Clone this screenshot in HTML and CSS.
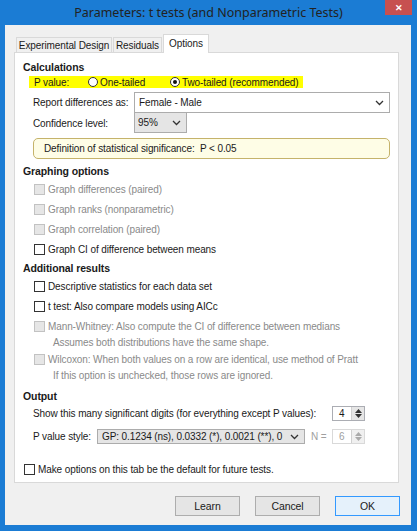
FILE: index.html
```html
<!DOCTYPE html>
<html>
<head>
  <meta name="viewport" content="width=device-width, initial-scale=1">
  <link rel="stylesheet" href="styles.css">
</head>
<body>
  <div class="window">
    <div class="titlebar">
      <span class="title">Parameters: t tests (and Nonparametric Tests)</span>
      <span class="close">&#x2715;</span>
    </div>
    <div class="client">
      <div class="tabs">
        <div class="tab tab-design">Experimental Design</div>
        <div class="tab tab-resid">Residuals</div>
        <div class="tab active">Options</div>
      </div>
      <div class="panel">
        <div class="heading h-calc">Calculations</div>
        <div class="row row-p">
          <span class="highlight">
            <span class="lbl-p">P value:</span>
            <span class="radio"></span><span class="radio-text">One-tailed</span>
            <span class="radio checked"></span><span class="radio-text last">Two-tailed (recommended)</span>
          </span>
        </div>
        <div class="row row-report">
          <span class="lbl-field">Report differences as:</span>
          <div class="select select-wide">
            <span>Female - Male</span>
            <svg width="9" height="6" viewBox="0 0 9 6"><path d="M1 1 L4.5 4.5 L8 1" fill="none" stroke="#333" stroke-width="1.3"/></svg>
          </div>
        </div>
        <div class="row row-conf">
          <span class="lbl-field">Confidence level:</span>
          <div class="select select-gray select-conf">
            <span>95%</span>
            <svg width="9" height="6" viewBox="0 0 9 6"><path d="M1 1 L4.5 4.5 L8 1" fill="none" stroke="#333" stroke-width="1.3"/></svg>
          </div>
        </div>
        <div class="defbox">Definition of statistical significance:&nbsp; P &lt; 0.05</div>

        <div class="heading h-graph">Graphing options</div>
        <div class="check-row disabled"><span class="box"></span>Graph differences (paired)</div>
        <div class="check-row disabled"><span class="box"></span>Graph ranks (nonparametric)</div>
        <div class="check-row disabled"><span class="box"></span>Graph correlation (paired)</div>
        <div class="check-row"><span class="box"></span>Graph CI of difference between means</div>

        <div class="heading h-add">Additional results</div>
        <div class="check-row"><span class="box"></span>Descriptive statistics for each data set</div>
        <div class="check-row"><span class="box"></span>t test: Also compare models using AICc</div>
        <div class="check-row disabled"><span class="box"></span>Mann-Whitney: Also compute the CI of difference between medians</div>
        <div class="sub">Assumes both distributions have the same shape.</div>
        <div class="check-row disabled"><span class="box"></span>Wilcoxon: When both values on a row are identical, use method of Pratt</div>
        <div class="sub">If this option is unchecked, those rows are ignored.</div>

        <div class="heading h-out">Output</div>
        <div class="row row-digits">
          <span class="lbl-digits">Show this many significant digits (for everything except P values):</span>
          <div class="spin">
            <span class="spin-val">4</span>
            <span class="spin-btns">
              <svg width="7" height="4" viewBox="0 0 7 4"><path d="M0 4 L3.5 0 L7 4 Z" fill="#333"/></svg>
              <svg width="7" height="4" viewBox="0 0 7 4"><path d="M0 0 L3.5 4 L7 0 Z" fill="#333"/></svg>
            </span>
          </div>
        </div>
        <div class="row row-style">
          <span class="lbl-style">P value style:</span>
          <div class="select select-gray select-style">
            <span class="clip">GP: 0.1234 (ns), 0.0332 (*), 0.0021 (**), 0</span>
            <svg width="9" height="6" viewBox="0 0 9 6"><path d="M1 1 L4.5 4.5 L8 1" fill="none" stroke="#333" stroke-width="1.3"/></svg>
          </div>
          <span class="lbl-n">N =</span>
          <div class="spin spin-off">
            <span class="spin-val">6</span>
            <span class="spin-btns">
              <svg width="7" height="4" viewBox="0 0 7 4"><path d="M0 4 L3.5 0 L7 4 Z" fill="#aaa"/></svg>
              <svg width="7" height="4" viewBox="0 0 7 4"><path d="M0 0 L3.5 4 L7 0 Z" fill="#aaa"/></svg>
            </span>
          </div>
        </div>
        <div class="check-row default-row"><span class="box"></span>Make options on this tab be the default for future tests.</div>
      </div>
      <div class="buttons">
        <div class="btn">Learn</div>
        <div class="btn">Cancel</div>
        <div class="btn btn-ok">OK</div>
      </div>
    </div>
  </div>
</body>
</html>
```

FILE: styles.css
```css
body {
  margin: 0;
  padding: 0;
  background-color: #1b7cd4;
  font-family: "Liberation Sans", Arial, sans-serif;
  font-size: 10px;
  letter-spacing: -0.1px;
  color: #1a1a1a;
  white-space: nowrap;
}
.window {
  width: 417px;
  height: 531px;
  background-color: #1b7cd4;
}
.titlebar {
  height: 25px;
  position: relative;
  display: flex;
  justify-content: center;
  align-items: center;
}
.title {
  font-family: "Noto Sans", sans-serif;
  font-size: 12.5px;
  letter-spacing: 0;
  color: #222;
  margin-top: -1px;
}
.close {
  position: absolute;
  top: 0;
  right: 5px;
  width: 27px;
  height: 15px;
  background-color: #c75050;
  color: #fff;
  font-size: 9px;
  font-weight: bold;
  display: flex;
  justify-content: center;
  align-items: center;
}
.client {
  margin-left: 5px;
  width: 406px;
  height: 500px;
  background-color: #f0f0f0;
  box-sizing: border-box;
  padding-top: 9px;
}

/* tabs */
.tabs {
  display: flex;
  align-items: flex-end;
  height: 18px;
  margin-left: 11px;
  position: relative;
  z-index: 1;
}
.tab {
  height: 15px;
  box-sizing: border-box;
  border: 1px solid #d9d9d9;
  border-bottom: none;
  background-color: #f0f0f0;
  display: flex;
  align-items: center;
  justify-content: center;
  margin-right: 1px;
  flex-shrink: 0;
}
.tab-design { width: 96px; }
.tab-resid { width: 49px; }
.tab.active {
  width: 46px;
  height: 19px;
  background-color: #fff;
  margin-bottom: -1px;
  padding-bottom: 2px;
}

/* panel */
.panel {
  margin-left: 9px;
  width: 385px;
  height: 431px;
  box-sizing: border-box;
  background-color: #fff;
  border: 1px solid #d9d9d9;
  padding: 6px 0 0 8px;
}
.heading {
  font-weight: bold;
  font-size: 10.5px;
  height: 16px;
  line-height: 16px;
}
.h-graph { margin-top: 4px; }
.h-add { margin-top: 1px; }
.h-out { margin-top: 6px; }

.row {
  display: flex;
  align-items: center;
}
.row > * { flex-shrink: 0; }
.row-p { height: 14px; }
.highlight {
  display: flex;
  align-items: center;
  background-color: #ffff00;
  height: 12px;
  margin-left: 6px;
  padding: 0 4px 0 5px;
}
.highlight > * { flex-shrink: 0; }
.lbl-p { width: 54px; }
.radio {
  width: 10px;
  height: 10px;
  box-sizing: border-box;
  border: 1px solid #333;
  border-radius: 50%;
  background-color: #fff;
  margin-right: 2px;
  position: relative;
}
.radio.checked::after {
  content: "";
  position: absolute;
  left: 2px;
  top: 2px;
  width: 4px;
  height: 4px;
  border-radius: 50%;
  background-color: #111;
}
.radio-text {
  width: 70px;
}
.radio-text.last { width: auto; }

.row-report {
  height: 21px;
  margin-top: 3px;
}
.row-conf { height: 20px; }
.lbl-field {
  width: 101px;
  margin-left: 10px;
}
.select {
  height: 100%;
  box-sizing: border-box;
  border: 1px solid #acacac;
  background-color: #fff;
  display: flex;
  align-items: center;
  justify-content: space-between;
  padding: 0 5px 0 4px;
}
.select-wide { width: 256px; }
.select-gray { background-color: #e5e5e5; }
.select-conf {
  width: 53px;
  border-top: none;
  padding-left: 3px;
}

.defbox {
  margin: 5px 0 0 10px;
  width: 357px;
  height: 21px;
  box-sizing: border-box;
  background-color: #fefde6;
  border: 1px solid #c5b36b;
  border-radius: 5px;
  display: flex;
  align-items: center;
  padding-left: 10px;
}

/* checkboxes */
.check-row {
  height: 20px;
  display: flex;
  align-items: center;
  margin-left: 11px;
}
.box {
  width: 11px;
  height: 11px;
  box-sizing: border-box;
  border: 1px solid #333;
  background-color: #fff;
  margin-right: 3px;
  flex-shrink: 0;
}
.check-row.disabled { color: #8a8a8a; }
.check-row.disabled .box {
  border-color: #c2c2c2;
  background-color: #e6e6e6;
}
.sub {
  height: 13px;
  line-height: 13px;
  margin-left: 30px;
  color: #8a8a8a;
}

/* output */
.row-digits {
  height: 15px;
  margin-top: 2px;
}
.lbl-digits {
  margin-left: 10px;
  width: 299px;
}
.spin {
  width: 33px;
  height: 15px;
  box-sizing: border-box;
  border: 1px solid #abadb3;
  background-color: #fff;
  display: flex;
}
.spin-val {
  flex: 1;
  padding-left: 6px;
  line-height: 13px;
}
.spin-btns {
  width: 12px;
  background-color: #e6e6e6;
  border-left: 1px solid #d0d0d0;
  display: flex;
  flex-direction: column;
  justify-content: space-around;
  align-items: center;
  padding: 1px 0;
}
.spin-off {
  border-color: #d9d9d9;
  color: #a0a0a0;
}
.spin-off .spin-btns { background-color: #f0f0f0; }
.row-style {
  height: 15px;
  margin-top: 8px;
}
.lbl-style {
  margin-left: 10px;
  width: 64px;
}
.select-style {
  width: 208px;
  padding-left: 4px;
}
.clip {
  overflow: hidden;
  width: 186px;
}
.lbl-n {
  width: 27px;
  color: #a0a0a0;
  padding-left: 6px;
  box-sizing: border-box;
}
.default-row {
  margin-left: 1px;
  margin-top: 18px;
  height: 14px;
}

/* buttons */
.buttons {
  display: flex;
  justify-content: flex-end;
  gap: 15px;
  margin-top: 13px;
  padding-right: 11px;
}
.btn {
  width: 65px;
  height: 20px;
  box-sizing: border-box;
  border: 1px solid #adadad;
  background-color: #e5e5e5;
  display: flex;
  align-items: center;
  justify-content: center;
  font-size: 10.5px;
}
.btn-ok {
  border-color: #3399ff;
  background-color: #e5f1fb;
}
```
